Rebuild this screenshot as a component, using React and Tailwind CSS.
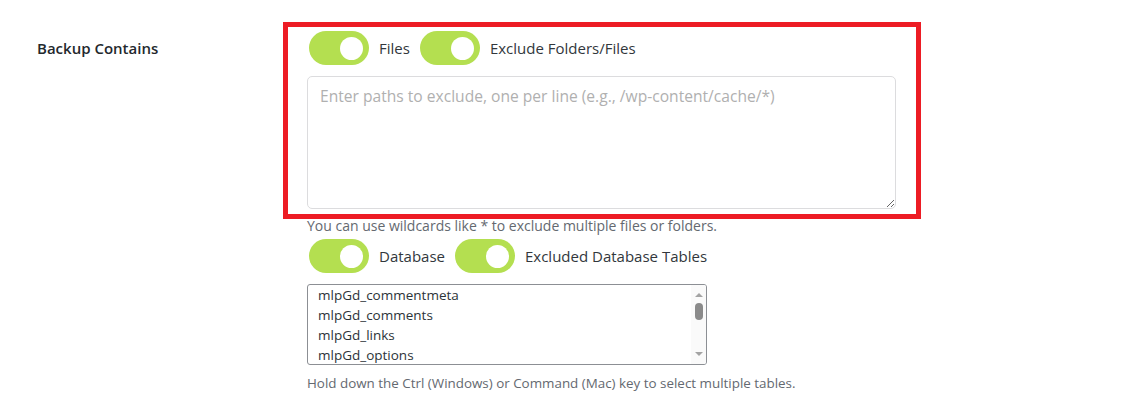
import { useState } from 'react';

const tables = [
  'mlpGd_commentmeta',
  'mlpGd_comments',
  'mlpGd_links',
  'mlpGd_options',
  'mlpGd_postmeta',
  'mlpGd_posts',
  'mlpGd_term_relationships',
  'mlpGd_term_taxonomy',
  'mlpGd_termmeta',
  'mlpGd_terms',
  'mlpGd_usermeta',
  'mlpGd_users',
];

const VISIBLE_ROWS = 4;

function Toggle({ checked, onChange }) {
  return (
    <button
      type="button"
      onClick={() => onChange(!checked)}
      className={`flex h-[34px] w-[60px] shrink-0 items-center rounded-full px-[6px] ${
        checked ? 'justify-end bg-[#b4df50]' : 'justify-start bg-[#cccccc]'
      }`}
    >
      <span className="h-[23px] w-[23px] rounded-full bg-white" />
    </button>
  );
}

function ToggleLabel({ children }) {
  return <span className="text-[15px] text-[#32373c]">{children}</span>;
}

function TableList({ selected, onToggle }) {
  const [offset, setOffset] = useState(0);
  const maxOffset = tables.length - VISIBLE_ROWS;
  const visible = tables.slice(offset, offset + VISIBLE_ROWS);
  // thumb travels over the 30px between the arrows
  const thumbTop = maxOffset > 0 ? Math.round((offset / maxOffset) * 28) : 0;

  return (
    <div
      role="listbox"
      aria-multiselectable="true"
      className="mt-[11px] flex h-[81px] w-[400px] overflow-hidden rounded-[3px] border border-[#8c8f94]"
    >
      <ul className="flex-1 pl-[10px] text-[13.5px] leading-[20px] text-[#2c3338]">
        {visible.map((table) => (
          <li
            key={table}
            role="option"
            aria-selected={selected.includes(table)}
            onClick={() => onToggle(table)}
            className={selected.includes(table) ? 'bg-[#cecece]' : ''}
          >
            {table}
          </li>
        ))}
      </ul>
      <div className="flex w-[15px] shrink-0 flex-col items-center bg-[#fafafa] py-[8px]">
        <button type="button" onClick={() => setOffset((o) => Math.max(0, o - 1))} aria-label="Scroll up">
          <svg width="8" height="4" viewBox="0 0 8 4" className="block">
            <path d="M0 4 L4 0 L8 4 Z" fill="#a3a3a3" />
          </svg>
        </button>
        <div className="mt-[6px] flex-1">
          <div className="h-[17px] w-[8px] rounded-full bg-[#8a8a8a]" style={{ marginTop: thumbTop }} />
        </div>
        <button type="button" onClick={() => setOffset((o) => Math.min(maxOffset, o + 1))} aria-label="Scroll down">
          <svg width="8" height="4" viewBox="0 0 8 4" className="block">
            <path d="M0 0 L8 0 L4 4 Z" fill="#a3a3a3" />
          </svg>
        </button>
      </div>
    </div>
  );
}

function App() {
  const [files, setFiles] = useState(true);
  const [excludeFiles, setExcludeFiles] = useState(true);
  const [database, setDatabase] = useState(true);
  const [excludeTables, setExcludeTables] = useState(true);
  const [selectedTables, setSelectedTables] = useState([]);

  const toggleTable = (table) => {
    setSelectedTables((current) =>
      current.includes(table) ? current.filter((item) => item !== table) : [...current, table],
    );
  };

  return (
    <div className="min-h-[404px] bg-white font-['Open_Sans',sans-serif] text-[#32373c]">
      <div className="flex pt-[31px]">
        <div className="w-[307px] shrink-0 pl-[37px] pt-[6px] text-[15px] font-semibold text-[#23282d]">
          Backup Contains
        </div>
        <div className="flex w-[590px] flex-col">
          <div className="relative">
            <div className="flex items-center gap-[10px] pl-[2px]">
              <Toggle checked={files} onChange={setFiles} />
              <ToggleLabel>Files</ToggleLabel>
              <Toggle checked={excludeFiles} onChange={setExcludeFiles} />
              <ToggleLabel>Exclude Folders/Files</ToggleLabel>
            </div>
            <textarea
              placeholder="Enter paths to exclude, one per line (e.g., /wp-content/cache/*)"
              className="mt-[11px] block h-[133px] w-[589px] rounded-[5px] border border-[#dcdcde] px-[12px] py-[8px] text-[15.6px] placeholder:text-[#b0b0b0] focus:outline-none"
            />
            {/* highlight frame drawn over the files group */}
            <div className="pointer-events-none absolute top-[-9px] left-[-24px] h-[197px] w-[638px] border-[5px] border-[#ed1c24]" />
          </div>
          <p className="mt-[6px] text-[14px] text-[#646970]">
            You can use wildcards like * to exclude multiple files or folders.
          </p>
          <div className="mt-[3px] flex items-center gap-[10px] pl-[2px]">
            <Toggle checked={database} onChange={setDatabase} />
            <ToggleLabel>Database</ToggleLabel>
            <Toggle checked={excludeTables} onChange={setExcludeTables} />
            <ToggleLabel>Excluded Database Tables</ToggleLabel>
          </div>
          <TableList selected={selectedTables} onToggle={toggleTable} />
          <p className="mt-[8px] text-[13.4px] text-[#646970]">
            Hold down the Ctrl (Windows) or Command (Mac) key to select multiple tables.
          </p>
        </div>
      </div>
    </div>
  );
}

export default App;
